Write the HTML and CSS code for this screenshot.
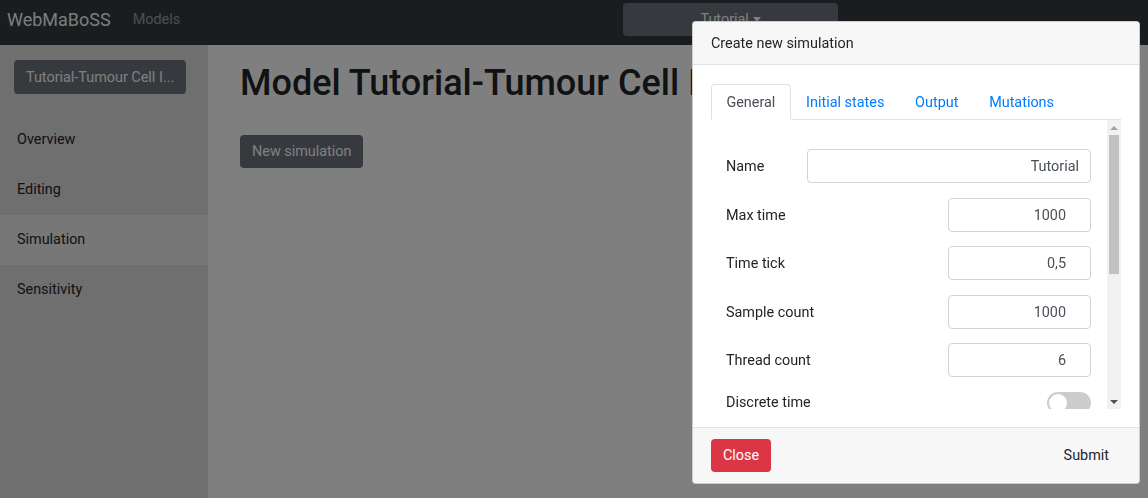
FILE: index.html
```html
<!DOCTYPE html>
<html lang="en">
<head>
<meta charset="utf-8">
<title>WebMaBoSS</title>
<link rel="stylesheet" href="styles.css">
</head>
<body>
<nav class="navbar">
  <a class="brand">WebMaBoSS</a>
  <a class="nav-link">Models</a>
  <button class="project-btn">Tutorial<span class="caret"></span></button>
</nav>
<div class="layout">
  <aside class="sidebar">
    <button class="model-btn">Tutorial-Tumour Cell I...</button>
    <ul class="side-nav">
      <li>Overview</li>
      <li>Editing</li>
      <li class="active">Simulation</li>
      <li>Sensitivity</li>
    </ul>
  </aside>
  <main class="main">
    <h1 class="title">Model Tutorial-Tumour Cell Invasion</h1>
    <button class="new-sim">New simulation</button>
  </main>
</div>
<div class="backdrop"></div>
<div class="modal">
  <div class="modal-header">Create new simulation</div>
  <div class="modal-body">
    <ul class="tabs">
      <li class="tab active">General</li>
      <li class="tab">Initial states</li>
      <li class="tab">Output</li>
      <li class="tab">Mutations</li>
    </ul>
    <div class="tab-pane">
      <div class="scroll-content">
        <div class="row"><label>Name</label><input class="field field-wide" type="text" value="Tutorial"></div>
        <div class="row"><label>Max time</label><input class="field field-num" type="text" value="1000"></div>
        <div class="row"><label>Time tick</label><input class="field field-num" type="text" value="0,5"></div>
        <div class="row"><label>Sample count</label><input class="field field-num" type="text" value="1000"></div>
        <div class="row"><label>Thread count</label><input class="field field-num" type="text" value="6"></div>
        <div class="row row-toggle"><label>Discrete time</label><span class="toggle"><span class="knob"></span></span></div>
      </div>
      <div class="scrollbar">
        <span class="sb-btn"><span class="tri-up"></span></span>
        <span class="thumb"></span>
        <span class="sb-space"></span>
        <span class="sb-btn"><span class="tri-down"></span></span>
      </div>
    </div>
  </div>
  <div class="modal-footer">
    <button class="btn-close">Close</button>
    <button class="btn-submit">Submit</button>
  </div>
</div>
</body>
</html>
```

FILE: styles.css
```css
* { box-sizing: border-box; }
html, body {
  margin: 0;
  height: 100%;
  overflow: hidden;
}
body {
  font-family: Roboto, "Liberation Sans", sans-serif;
  font-size: 14.4px;
  line-height: 1.5;
  color: #212529;
  background: #fff;
}
button {
  font-family: inherit;
  font-size: 14.4px;
  border: none;
  cursor: pointer;
}
ul { list-style: none; margin: 0; padding: 0; }

/* navbar */
.navbar {
  height: 45px;
  background: #343a40;
  display: flex;
  align-items: flex-start;
  padding: 3px 7px 0;
}
.brand {
  color: #f8f9fa;
  font-size: 18px;
  line-height: 33px;
}
.nav-link {
  color: rgba(255, 255, 255, 0.5);
  line-height: 33px;
  margin-left: 22px;
}
.project-btn {
  margin-left: 443px;
  width: 215px;
  height: 33px;
  background: #6c757d;
  color: #fff;
  border-radius: 4px;
  display: flex;
  align-items: center;
  justify-content: center;
}
.caret {
  display: inline-block;
  margin-left: 4px;
  border-left: 4.5px solid transparent;
  border-right: 4.5px solid transparent;
  border-top: 5px solid #fff;
}

/* layout */
.layout {
  display: flex;
  height: calc(100% - 45px);
}
.sidebar {
  width: 208px;
  flex: none;
  background: #dedede;
  padding-top: 15px;
}
.model-btn {
  margin-left: 14px;
  width: 172px;
  height: 34px;
  background: #6c757d;
  color: #fff;
  border-radius: 4px;
  text-align: left;
  padding: 0 12px;
  white-space: nowrap;
  overflow: hidden;
}
.side-nav {
  margin-top: 21px;
}
.side-nav li {
  height: 50px;
  line-height: 50px;
  padding-left: 17px;
  color: #212529;
}
.side-nav li.active {
  background: #eeeeee;
}
.main {
  flex: 1;
  background: #fff;
  padding: 0 32px;
  overflow: hidden;
}
.title {
  margin: 17px 0 0;
  font-size: 36px;
  font-weight: 500;
  line-height: 1.2;
  white-space: nowrap;
}
.new-sim {
  margin-top: 30px;
  height: 33px;
  padding: 0 12px;
  background: #6c757d;
  color: #fff;
  border-radius: 4px;
}

/* backdrop + modal */
.backdrop {
  position: fixed;
  inset: 0;
  background: rgba(0, 0, 0, 0.5);
}
.modal {
  position: fixed;
  top: 21px;
  left: 692px;
  width: 448px;
  height: 463px;
  background: #fff;
  border: 1px solid rgba(0, 0, 0, 0.2);
  border-radius: 4px;
  display: flex;
  flex-direction: column;
  overflow: hidden;
}
.modal-header {
  background: #f7f7f7;
  border-bottom: 1px solid #dee2e6;
  height: 43px;
  line-height: 42px;
  padding: 1px 18px 0;
}
.modal-body {
  padding: 19px 18px 17px;
}
.tabs {
  display: flex;
  border-bottom: 1px solid #dee2e6;
}
.tab {
  padding: 8px 14.4px 6px;
  line-height: 20px;
  border: 1px solid transparent;
  border-top-left-radius: 4px;
  border-top-right-radius: 4px;
  margin-bottom: -1px;
  color: #007bff;
}
.tab.active {
  color: #495057;
  border-color: #dee2e6 #dee2e6 #fff;
  background: #fff;
}
.tab-pane {
  display: flex;
  height: 289px;
}
.scroll-content {
  flex: 1;
  overflow: hidden;
  padding: 29px 16px 0 15px;
}
.row {
  display: flex;
  align-items: center;
  justify-content: space-between;
  height: 34px;
  margin-bottom: 14.5px;
}
.row label {
  padding-top: 2px;
}
.row-toggle {
  height: 22px;
  margin-top: 1px;
}
.row-toggle label {
  padding-top: 0;
  line-height: 16px;
}
.field {
  height: 34px;
  border: 1px solid #ced4da;
  border-radius: 4px;
  font-family: inherit;
  font-size: 14.4px;
  color: #495057;
  text-align: right;
  padding: 1px 11px 0;
  background: #fff;
}
.field-wide { width: 284px; }
.field-num { width: 143px; padding-right: 24px; }
.toggle {
  width: 44px;
  height: 22px;
  border-radius: 11px;
  background: #cccccc;
  display: flex;
  align-items: center;
  padding: 0 2px;
}
.knob {
  width: 18px;
  height: 18px;
  border-radius: 50%;
  background: #fff;
}
.scrollbar {
  width: 14px;
  flex: none;
  background: #f1f1f1;
  display: flex;
  flex-direction: column;
  align-items: center;
}
.sb-btn {
  height: 15px;
  width: 14px;
  display: flex;
  align-items: center;
  justify-content: center;
}
.tri-up {
  border-left: 4px solid transparent;
  border-right: 4px solid transparent;
  border-bottom: 4px solid #a3a3a3;
}
.tri-down {
  border-left: 4px solid transparent;
  border-right: 4px solid transparent;
  border-top: 4px solid #505050;
}
.thumb {
  width: 10px;
  height: 139px;
  background: #c1c1c1;
}
.sb-space { flex: 1; }
.modal-footer {
  margin-top: auto;
  background: #f7f7f7;
  border-top: 1px solid #dee2e6;
  display: flex;
  justify-content: space-between;
  align-items: center;
  padding: 11px 19px 11px 18px;
}
.btn-close {
  height: 33px;
  padding: 0 12px;
  background: #dc3545;
  color: #fff;
  border-radius: 4px;
}
.btn-submit {
  height: 33px;
  padding: 0 11px;
  background: transparent;
  color: #212529;
}
```
